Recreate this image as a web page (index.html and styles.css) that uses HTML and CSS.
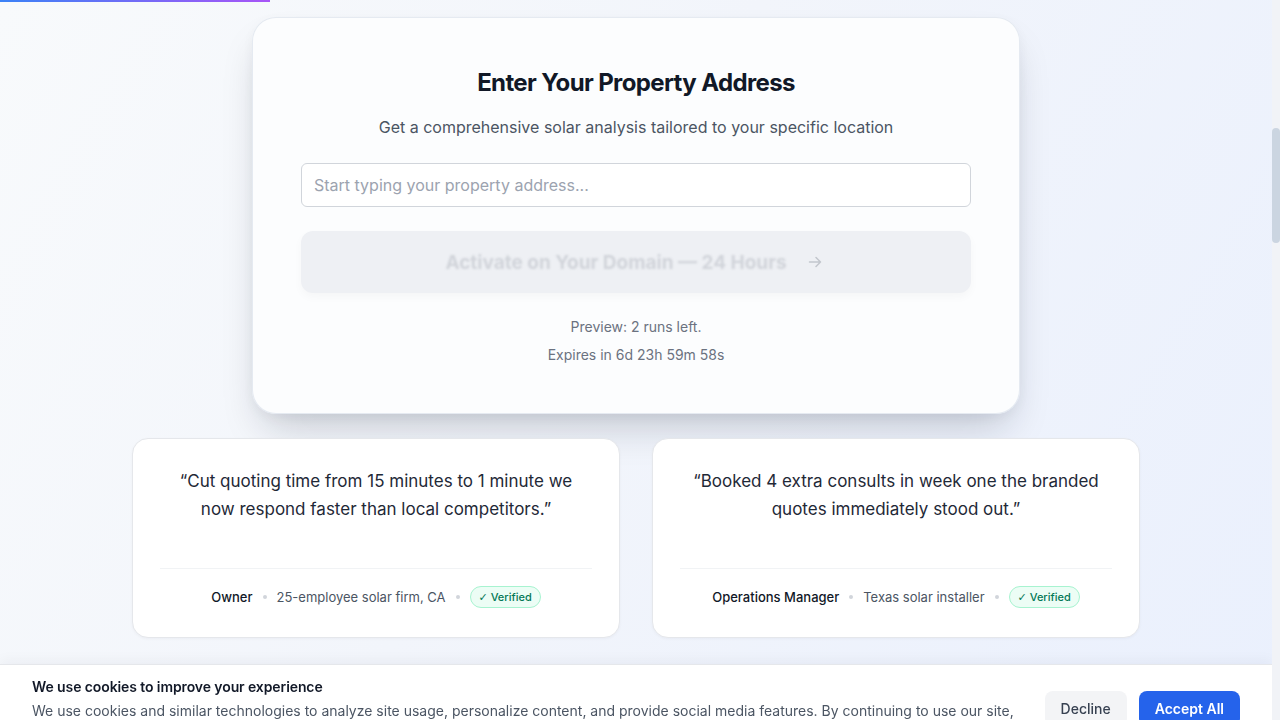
FILE: index.html
```html
<!DOCTYPE html>
<html lang="en">
<head>
<meta charset="utf-8">
<title>Enter Your Property Address</title>
<link rel="stylesheet" href="styles.css">
</head>
<body>
<div class="progress"></div>
<div class="page">
  <main class="main">
    <section class="card">
      <h1 class="title">Enter Your Property Address</h1>
      <p class="subtitle">Get a comprehensive solar analysis tailored to your specific location</p>
      <input class="address" type="text" placeholder="Start typing your property address...">
      <button class="cta" type="button" disabled>
        <span class="cta-text">Activate on Your Domain — 24 Hours</span>
        <svg class="cta-arrow" width="16" height="16" viewBox="0 0 16 16" fill="none" stroke="currentColor" stroke-width="1.5" stroke-linecap="round" stroke-linejoin="round"><path d="M2.5 8h11M9 3.5 13.5 8 9 12.5"/></svg>
      </button>
      <p class="note">Preview: 2 runs left.</p>
      <p class="note note-gap">Expires in 6d 23h 59m 58s</p>
    </section>

    <section class="testimonials">
      <article class="tcard">
        <p class="quote">“Cut quoting time from 15 minutes to 1 minute we now respond faster than local competitors.”</p>
        <div class="tfoot">
          <span class="role">Owner</span>
          <span class="dot"></span>
          <span class="meta">25-employee solar firm, CA</span>
          <span class="dot"></span>
          <span class="pill"><span class="check">✓</span> Verified</span>
        </div>
      </article>
      <article class="tcard">
        <p class="quote">“Booked 4 extra consults in week one the branded quotes immediately stood out.”</p>
        <div class="tfoot">
          <span class="role">Operations Manager</span>
          <span class="dot"></span>
          <span class="meta">Texas solar installer</span>
          <span class="dot"></span>
          <span class="pill"><span class="check">✓</span> Verified</span>
        </div>
      </article>
    </section>
  </main>
</div>

<div class="cookie">
  <div class="cookie-text">
    <p class="cookie-title">We use cookies to improve your experience</p>
    <p class="cookie-body">We use cookies and similar technologies to analyze site usage, personalize content, and provide social media features. By continuing to use our site, you agree to our use of cookies.</p>
  </div>
  <div class="cookie-actions">
    <button class="btn btn-decline" type="button">Decline</button>
    <button class="btn btn-accept" type="button">Accept All</button>
  </div>
</div>

<div class="scrollbar"><div class="scrollbar-thumb"></div></div>
</body>
</html>
```
FILE: styles.css
```css
* { box-sizing: border-box; }

html, body {
  margin: 0;
  height: 100%;
  overflow: hidden;
}

body {
  font-family: Inter, "Noto Sans", "Liberation Sans", sans-serif;
  color: #111827;
  background: linear-gradient(120deg, #f8fafc 0%, #f2f5fb 45%, #eaf0fd 100%);
}

.progress {
  position: fixed;
  top: 0;
  left: 0;
  width: 270px;
  height: 2px;
  background: linear-gradient(90deg, #3b82f6, #a855f7);
  z-index: 20;
}

.page {
  margin-right: 8px;
  min-height: 100%;
}

.main {
  padding-top: 17px;
  display: flex;
  flex-direction: column;
  align-items: center;
}

.card {
  width: 768px;
  padding: 49px 48px 48px;
  background: rgba(252, 253, 254, 0.96);
  border: 1px solid rgba(226, 232, 240, 0.9);
  border-radius: 24px;
  box-shadow: 0 22px 40px -12px rgba(15, 23, 42, 0.22), 0 4px 12px rgba(15, 23, 42, 0.04);
  display: flex;
  flex-direction: column;
  align-items: center;
}

.title {
  margin: 0 0 16px;
  font-size: 24px;
  line-height: 32px;
  font-weight: 700;
  letter-spacing: -0.62px;
  color: #111827;
}

.subtitle {
  margin: 0 0 24px;
  font-size: 16px;
  line-height: 24px;
  color: #4b5563;
}

.address {
  width: 100%;
  height: 44px;
  padding: 0 12px;
  border: 1px solid #d1d5db;
  border-radius: 6px;
  background: #fff;
  font-family: inherit;
  font-size: 16px;
  color: #111827;
  outline: none;
}

.address::placeholder { color: #9ca3af; }

.cta {
  margin-top: 24px;
  width: 100%;
  height: 62px;
  border: none;
  border-radius: 12px;
  background: #eef0f4;
  box-shadow: 0 4px 10px rgba(15, 23, 42, 0.03);
  display: flex;
  align-items: center;
  justify-content: center;
  gap: 20px;
  padding: 0 4px 0 0;
  font-family: inherit;
  cursor: not-allowed;
}

.cta-text {
  font-size: 19px;
  font-weight: 700;
  color: #d1d4da;
  filter: blur(0.8px);
  letter-spacing: 0;
}

.cta-arrow { color: #c2c6cd; }

.note {
  margin: 24px 0 0;
  font-size: 14px;
  line-height: 20px;
  color: #6b7280;
}

.note-gap { margin-top: 8px; }

.testimonials {
  margin-top: 24px;
  display: grid;
  grid-template-columns: 488px 488px;
  gap: 32px;
}

.tcard {
  background: #fff;
  border: 1px solid #e5e7eb;
  border-radius: 16px;
  padding: 28px 27px 29px;
  box-shadow: 0 1px 3px rgba(15, 23, 42, 0.04);
  display: flex;
  flex-direction: column;
}

.quote {
  margin: 0 0 45px;
  padding: 0 8px;
  font-size: 17px;
  line-height: 28px;
  text-align: center;
  color: #1f2937;
}

.tfoot {
  border-top: 1px solid #f1f3f5;
  padding-top: 17px;
  display: flex;
  align-items: center;
  justify-content: center;
  gap: 10px;
  font-size: 13px;
  line-height: 22px;
}

.role { font-weight: 500; color: #111827; }
.meta { color: #4b5563; }

.dot {
  width: 4px;
  height: 4px;
  border-radius: 50%;
  background: #d1d5db;
}

.pill {
  height: 22px;
  padding: 0 8px;
  border: 1px solid #a7f3d0;
  background: #ecfdf5;
  color: #047857;
  border-radius: 11px;
  font-size: 11px;
  font-weight: 500;
  line-height: 20px;
}

.check {
  font-family: "DejaVu Sans", sans-serif;
  font-weight: 700;
  font-size: 11px;
}

.cookie {
  position: fixed;
  left: 0;
  right: 8px;
  bottom: 0;
  top: 664px;
  background: #fff;
  border-top: 1px solid #e5e7eb;
  box-shadow: 0 -4px 12px rgba(15, 23, 42, 0.04);
  display: flex;
  align-items: flex-start;
  gap: 24px;
  padding: 12px 32px 0;
  z-index: 10;
}

.cookie-text { flex: 1; }

.cookie-title {
  margin: 0 0 4px;
  font-size: 14px;
  line-height: 20px;
  font-weight: 600;
  color: #111827;
  letter-spacing: -0.1px;
}

.cookie-body {
  margin: 0;
  font-size: 14px;
  line-height: 20px;
  color: #4b5563;
}

.cookie-actions {
  display: flex;
  gap: 12px;
  padding-top: 14px;
}

.btn {
  border: none;
  border-radius: 8px;
  padding: 8px 16px;
  font-family: inherit;
  font-size: 14px;
  line-height: 20px;
  font-weight: 500;
}

.btn-decline { background: #f3f4f6; color: #374151; }
.btn-accept { background: #2563eb; color: #fff; font-weight: 600; }

.scrollbar {
  position: fixed;
  top: 0;
  right: 0;
  bottom: 0;
  width: 8px;
  background: #f1f3f7;
  z-index: 30;
}

.scrollbar-thumb {
  margin-top: 128px;
  height: 115px;
  border-radius: 4px;
  background: #cbd5e1;
}
```
